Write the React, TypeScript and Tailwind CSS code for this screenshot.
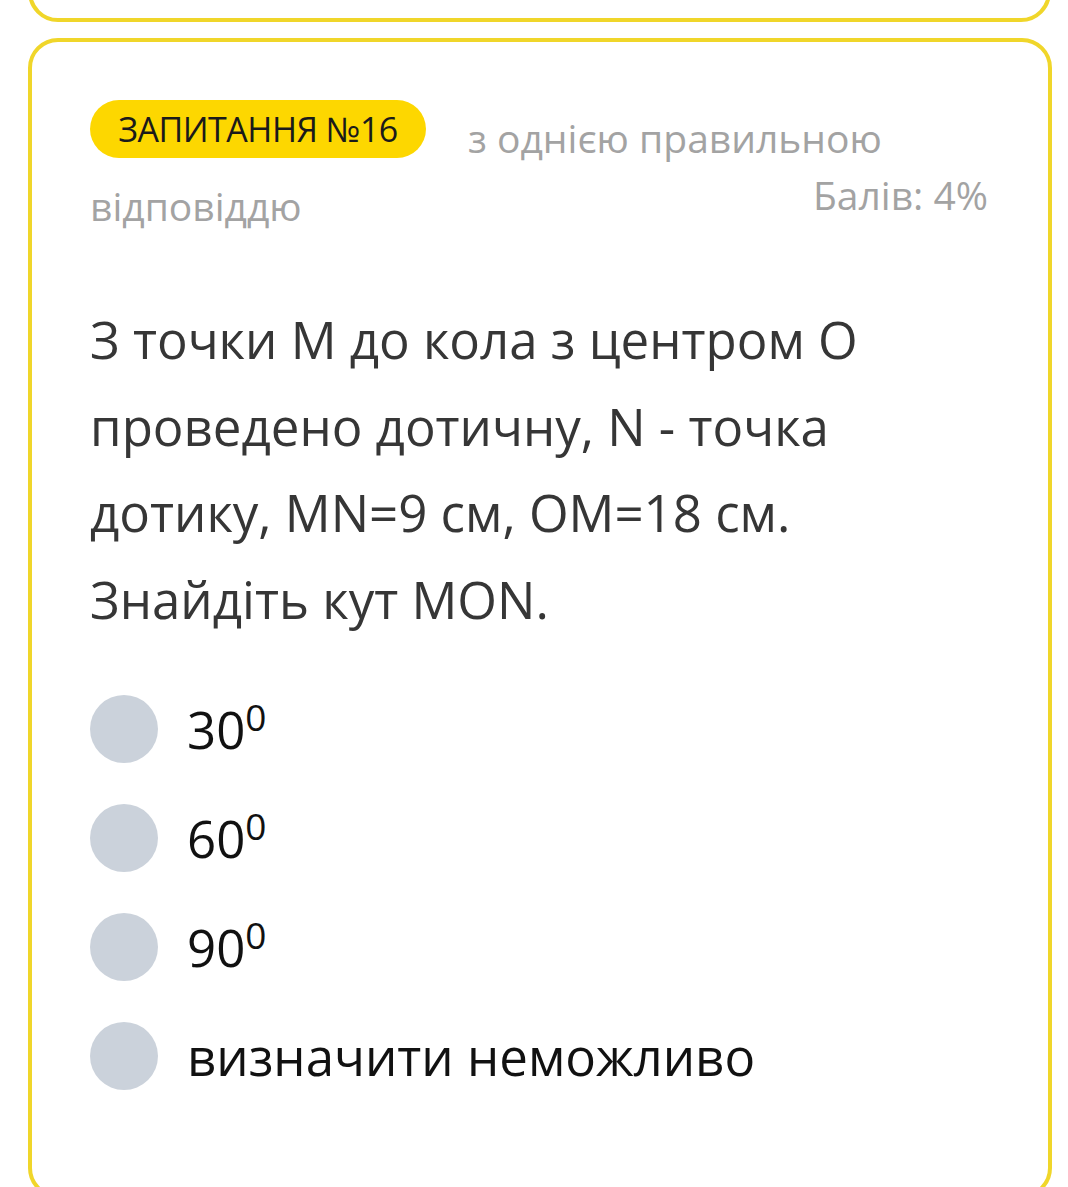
import React from 'react';

const options = [
  { value: '30', sup: true },
  { value: '60', sup: true },
  { value: '90', sup: true },
  { value: 'визначити неможливо', sup: false },
];

export default function App() {
  return (
    <div
      className="w-[1068px] h-[1187px] overflow-hidden bg-white"
      style={{ fontFamily: '"Open Sans", "Noto Sans", sans-serif' }}
    >
      {/* previous card, mostly scrolled away */}
      <div className="ml-[28px] mr-[17px] -mt-[40px] h-[62px] rounded-[30px] border-4 border-[#f0d62a]" />

      {/* question card */}
      <div className="ml-[28px] mr-[16px] mt-[16px] h-[1160px] rounded-[30px] border-4 border-[#f0d62a] pl-[58px] pr-[58px] pt-[58px]">
        {/* header */}
        <div className="flex items-start">
          <span className="inline-flex h-[58px] w-[336px] items-center justify-center rounded-full bg-[#fdd700] text-[34px] tracking-[-0.5px] text-[#1a1a1a]">
            ЗАПИТАННЯ №16
          </span>
          <span className="ml-[42px] mt-[12px] text-[39px] leading-[52px] text-[#a3a3a3]">
            з однією правильною
          </span>
        </div>
        <div className="flex items-start justify-between">
          <span className="mt-[16px] text-[39px] leading-[52px] text-[#a3a3a3]">відповіддю</span>
          <span className="mt-[5px] mr-[2px] text-[39px] leading-[52px] text-[#a3a3a3]">Балів: 4%</span>
        </div>

        {/* question text */}
        <p className="mt-[64px] text-[51px] leading-[86.5px] text-[#363636]">
          З точки М до кола з центром О
          <br />
          проведено дотичну, N - точка
          <br />
          дотику, MN=9 см, OM=18 см.
          <br />
          Знайдіть кут MON.
        </p>

        {/* answers */}
        <div className="mt-[53px] flex flex-col gap-[41px]">
          {options.map((o) => (
            <div key={o.value} className="flex items-center gap-[29px]">
              <span className="h-[68px] w-[68px] shrink-0 rounded-full bg-[#cbd2db]" />
              <span className="text-[51px] leading-[68px] text-[#111]">
                {o.value}
                {o.sup && <sup className="-top-[0.5em] text-[37px]">0</sup>}
              </span>
            </div>
          ))}
        </div>
      </div>
    </div>
  );
}
